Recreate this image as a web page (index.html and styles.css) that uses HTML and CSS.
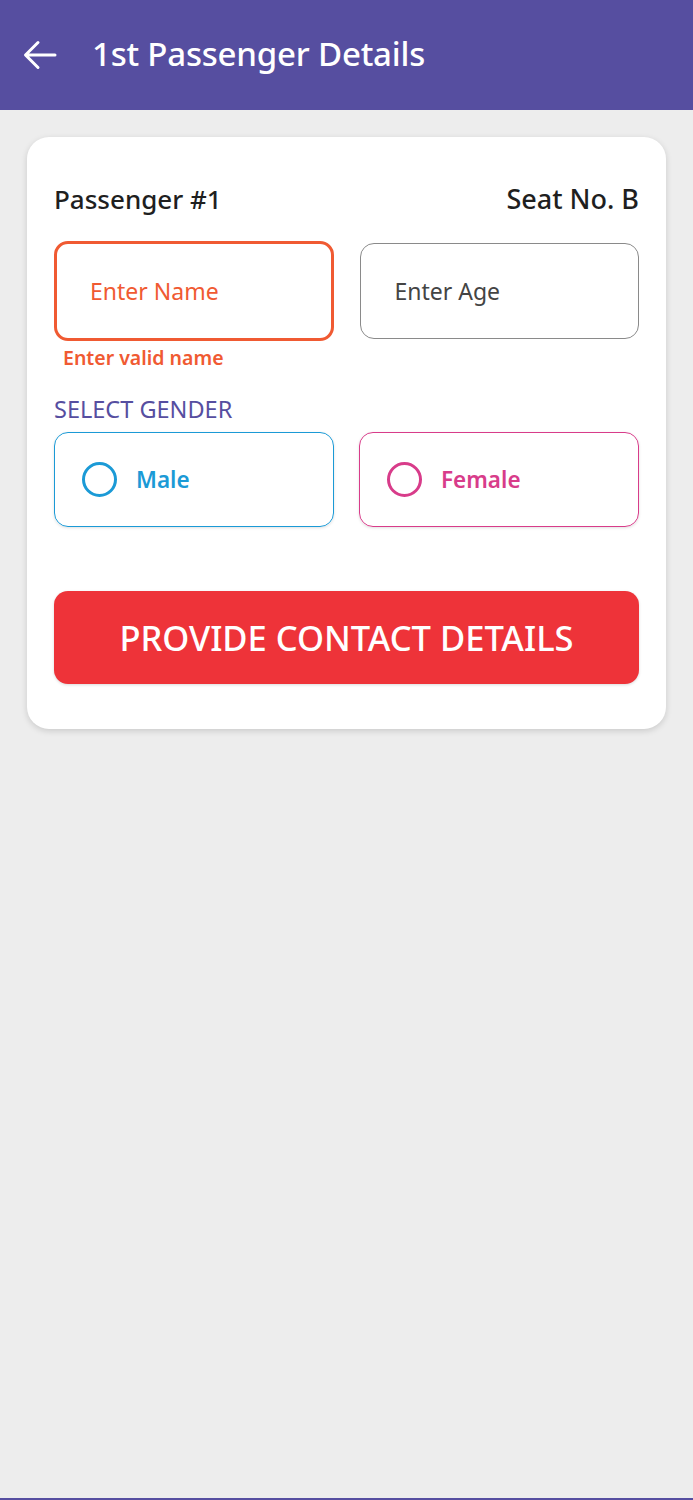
FILE: index.html
```html
<!DOCTYPE html>
<html lang="en">
  <head>
    <meta charset="UTF-8" />
    <meta name="viewport" content="width=device-width, initial-scale=1.0" />
    <title>1st Passenger Details</title>
    <link rel="stylesheet" href="styles.css">
  </head>
  <body>
    <div class="page">
      <header class="topbar">
        <button class="back" aria-label="Back">
          <svg width="34" height="30" viewBox="0 0 34 30" fill="none">
            <path d="M32 15H3M15 2.5L2.5 15L15 27.5" stroke="#fff" stroke-width="3" stroke-linecap="round" stroke-linejoin="round" />
          </svg>
        </button>
        <h1 class="title">1st Passenger Details</h1>
      </header>

      <main class="content">
        <div class="card">
          <div class="card-head">
            <span>Passenger #1</span>
            <span>Seat No. B</span>
          </div>

          <div class="fields">
            <div class="field">
              <input class="input input-error" type="text" placeholder="Enter Name" />
              <p class="error">Enter valid name</p>
            </div>
            <div class="field">
              <input class="input input-plain" type="text" placeholder="Enter Age" />
            </div>
          </div>

          <p class="label">SELECT GENDER</p>
          <div class="genders">
            <label class="gender male">
              <span class="radio"></span>
              Male
            </label>
            <label class="gender female">
              <span class="radio"></span>
              Female
            </label>
          </div>

          <button class="submit">PROVIDE CONTACT DETAILS</button>
        </div>
      </main>

      <div class="bottom-line"></div>
    </div>
  </body>
</html>
```

FILE: styles.css
```css
:root {
  --purple: #564ea0;
  --orange: #f05a32;
  --blue: #1b9ad6;
  --pink: #d83c8a;
  --red: #ee3339;
}

* {
  margin: 0;
  padding: 0;
  box-sizing: border-box;
}

body {
  font-family: "Noto Sans", "Open Sans", sans-serif;
  background: #ededed;
  color: #1f1f1f;
}

.page {
  min-height: 100vh;
  display: flex;
  flex-direction: column;
}

.topbar {
  height: 110px;
  background: var(--purple);
  display: flex;
  align-items: center;
  padding-left: 23px;
  gap: 35px;
}

.back {
  background: none;
  border: none;
  display: flex;
  cursor: pointer;
}

.title {
  color: #fff;
  font-size: 33px;
  font-weight: 500;
  letter-spacing: -0.2px;
  margin-top: -4px;
}

.content {
  flex: 1;
  padding: 27px 27px;
}

.card {
  background: #fff;
  border-radius: 22px;
  padding: 45px 27px 45px;
  box-shadow: 0 2px 6px rgba(0, 0, 0, 0.15);
}

.card-head {
  display: flex;
  justify-content: space-between;
  font-size: 26px;
  font-weight: 500;
  line-height: 34px;
  color: #1f1f1f;
}

.card-head span:last-child {
  font-size: 27px;
}

.fields {
  display: grid;
  grid-template-columns: 1fr 1fr;
  gap: 26px;
  margin-top: 25px;
}

.input {
  display: block;
  width: 100%;
  height: 100px;
  border: 1.5px solid #8a8a8a;
  border-radius: 14px;
  padding: 0 34px;
  font-family: inherit;
  font-size: 23px;
  outline: none;
  background: #fff;
}

.input::placeholder {
  color: #444;
}

.input-plain {
  height: 96px;
  margin-top: 2px;
}

.input-error {
  border: 3px solid var(--orange);
  padding: 0 33px;
}

.input-error::placeholder {
  color: var(--orange);
}

.error {
  color: var(--orange);
  font-size: 19.5px;
  font-weight: 600;
  line-height: 28px;
  margin-top: 3px;
  padding-left: 9px;
}

.label {
  color: var(--purple);
  font-size: 23.5px;
  line-height: 30px;
  margin-top: 22px;
}

.genders {
  display: grid;
  grid-template-columns: 1fr 1fr;
  gap: 25px;
  margin-top: 8px;
}

.gender {
  height: 95px;
  border: 1.5px solid;
  border-radius: 14px;
  display: flex;
  align-items: center;
  gap: 19px;
  padding-left: 27px;
  font-size: 22.5px;
  font-weight: 600;
  cursor: pointer;
  box-shadow: 0 1px 3px rgba(0, 0, 0, 0.12);
}

.radio {
  width: 35px;
  height: 35px;
  border: 3.5px solid currentColor;
  border-radius: 50%;
}

.male {
  color: var(--blue);
  border-color: var(--blue);
}

.female {
  color: var(--pink);
  border-color: var(--pink);
}

.submit {
  display: block;
  width: 100%;
  height: 93px;
  margin-top: 64px;
  background: var(--red);
  color: #fff;
  border: none;
  border-radius: 14px;
  font-family: inherit;
  font-size: 34.5px;
  font-weight: 500;
  cursor: pointer;
  box-shadow: 0 1px 3px rgba(0, 0, 0, 0.15);
}

.bottom-line {
  height: 2px;
  background: var(--purple);
}
```
